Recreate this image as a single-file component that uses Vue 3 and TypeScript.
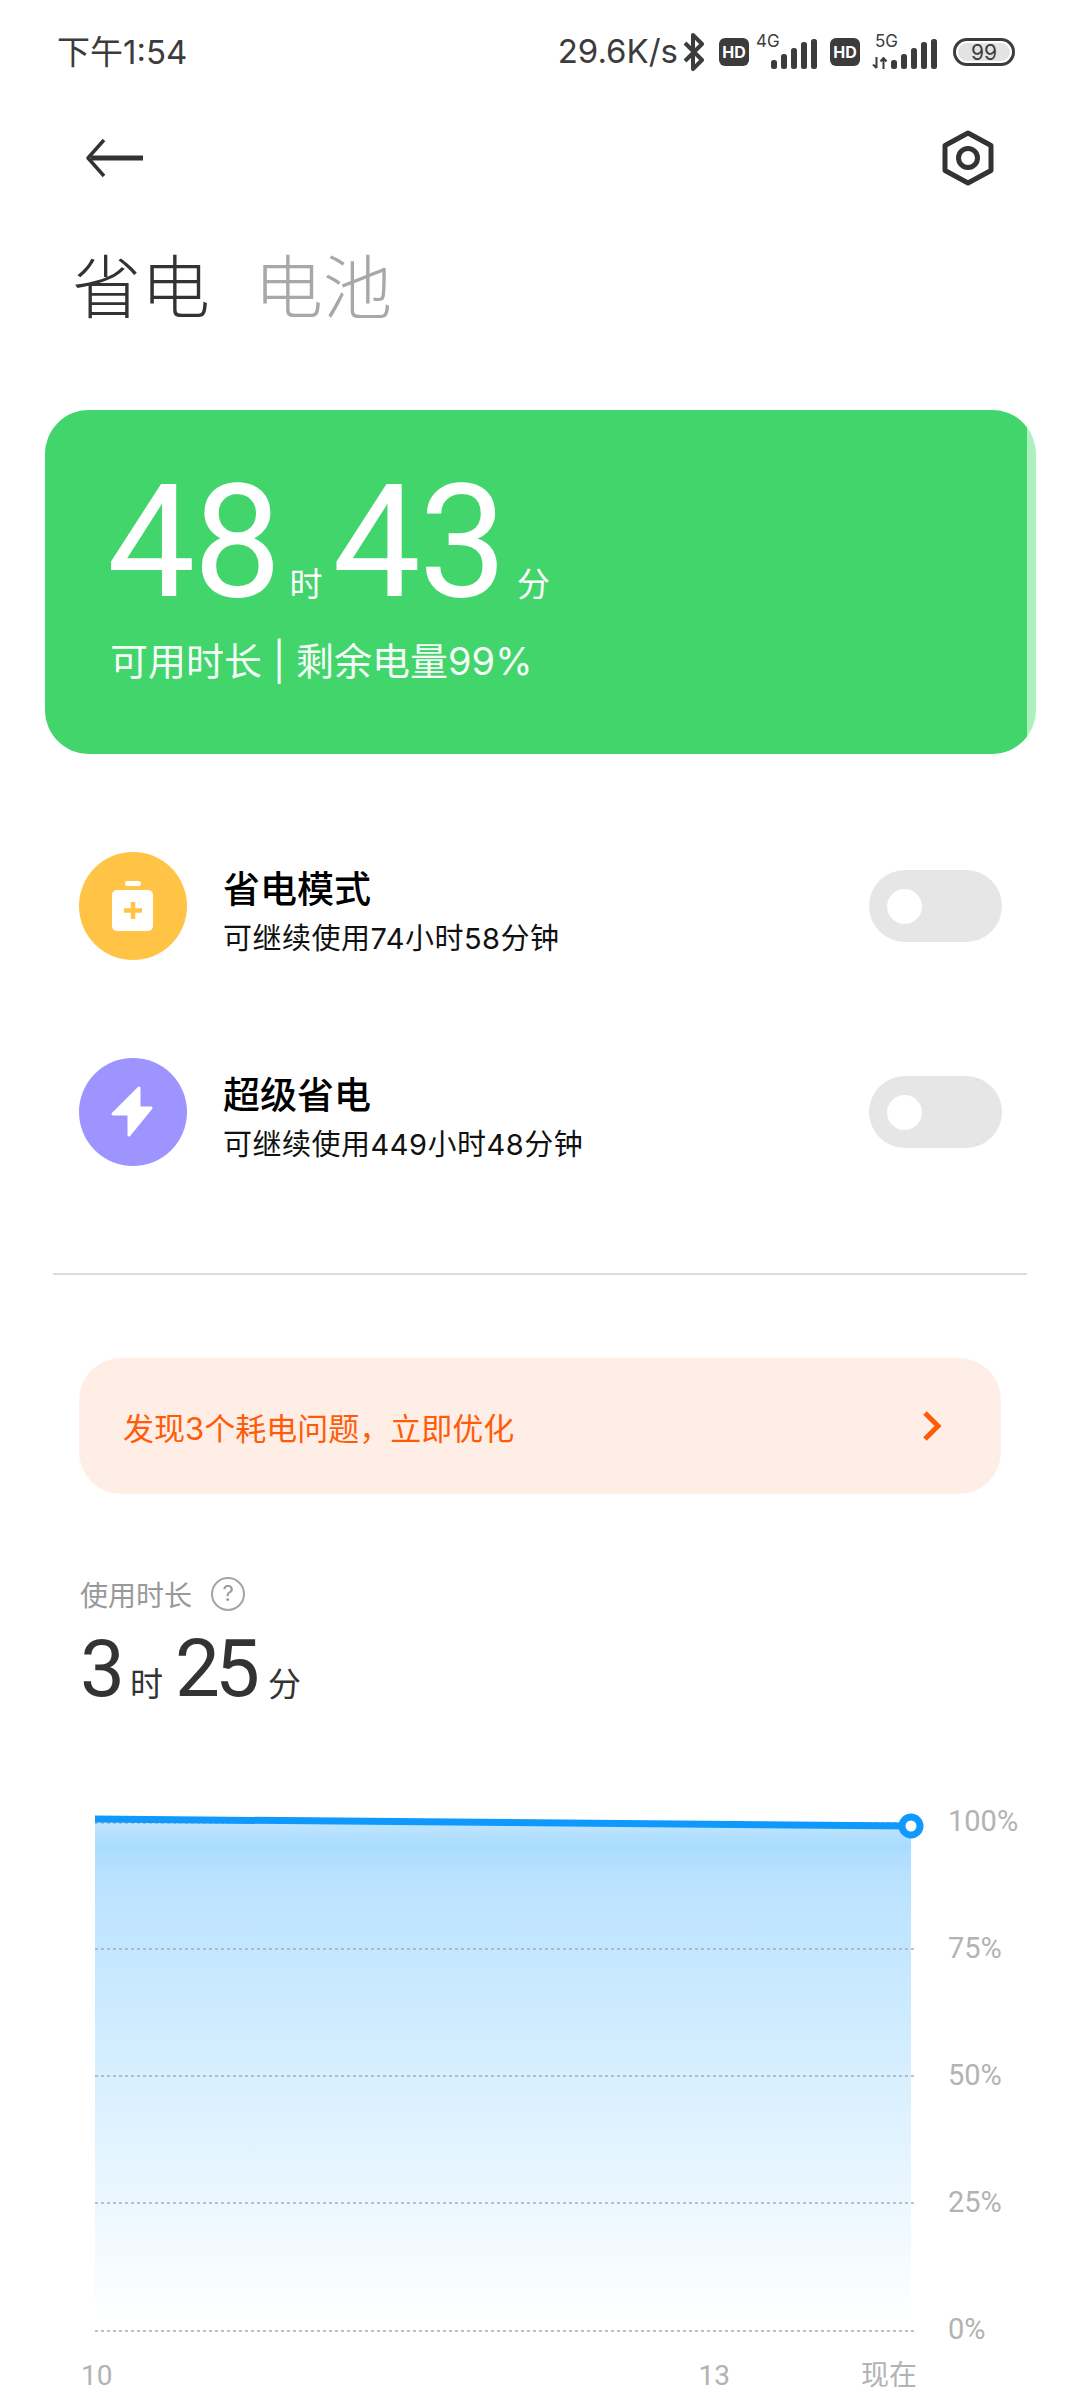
<template>
  <main class="page">
    <header class="status">
      <span class="clock">下午1:54</span>
      <div class="status-right">
        <span class="speed">29.6K/s</span>
        <svg class="bt" viewBox="0 0 24 38" width="24" height="38">
          <path d="M3 10 L20 27 L11 36 V2 L20 11 L3 28" fill="none" stroke="#3c3c3c" stroke-width="4" stroke-linejoin="round" />
        </svg>
        <span class="hd">HD</span>
        <div class="net net-4g">
          <span class="net-name">4G</span>
          <svg class="bars" viewBox="0 0 46 30" width="46" height="30">
            <rect v-for="(h, i) in barHeights" :key="i" :x="i * 10" :y="30 - h" width="6" :height="h" rx="2.5" fill="#3c3c3c" />
          </svg>
        </div>
        <span class="hd">HD</span>
        <div class="net net-5g">
          <span class="net-name">5G</span>
          <svg class="arrows" viewBox="0 0 16 12" width="16" height="12">
            <path d="M4.5 0 V11 M1 7.5 L4.5 11 M11.5 12 V1 M8.5 4.5 L11.5 1 L14.5 4.5" fill="none" stroke="#3c3c3c" stroke-width="2" />
          </svg>
          <svg class="bars" viewBox="0 0 46 30" width="46" height="30">
            <rect v-for="(h, i) in barHeights" :key="i" :x="i * 10" :y="30 - h" width="6" :height="h" rx="2.5" fill="#3c3c3c" />
          </svg>
        </div>
        <div class="battery"><span>99</span></div>
      </div>
    </header>

    <nav class="toolbar">
      <svg viewBox="0 0 60 40" width="60" height="40">
        <path d="M58 20 H6" fill="none" stroke="#333" stroke-width="5" />
        <path d="M19 2 L3 20 L19 38" fill="none" stroke="#333" stroke-width="3.5" stroke-linejoin="round" />
      </svg>
      <svg viewBox="0 0 54 56" width="54" height="56">
        <path d="M27 3 L50 15.5 V40.5 L27 53 L4 40.5 V15.5 Z" fill="none" stroke="#333" stroke-width="5" stroke-linejoin="round" />
        <circle cx="27" cy="28" r="9.5" fill="none" stroke="#333" stroke-width="5" />
      </svg>
    </nav>

    <div class="tabs">
      <span class="tab active">省电</span>
      <span class="tab">电池</span>
    </div>

    <section class="card">
      <div class="card-inner">
        <div class="hero">
          <span class="hero-num">48</span><span class="hero-unit">时</span>
          <span class="hero-num">43</span><span class="hero-unit hero-unit-end">分</span>
        </div>
        <p class="hero-sub">可用时长 | 剩余电量99%</p>
      </div>
    </section>

    <section class="modes">
      <div v-for="mode in modes" :key="mode.title" class="mode">
        <div class="mode-icon" :class="mode.kind">
          <svg v-if="mode.kind === 'save'" viewBox="0 0 108 108" width="108" height="108">
            <rect x="46" y="29" width="16" height="5" rx="2.5" fill="#fff" />
            <rect x="33" y="38" width="41" height="41" rx="5" fill="#fff" />
            <path d="M54 50 V67 M45 58.5 H63" stroke="#ffc445" stroke-width="4.5" />
          </svg>
          <svg v-else viewBox="0 0 108 108" width="108" height="108">
            <path d="M60 30 L34 56 H50 V77 L72 50 H60 Z" fill="#fff" stroke="#fff" stroke-width="3" stroke-linejoin="round" />
          </svg>
        </div>
        <div class="mode-text">
          <h3>{{ mode.title }}</h3>
          <p>{{ mode.desc }}</p>
        </div>
        <div class="toggle"><i></i></div>
      </div>
    </section>

    <hr class="divider" />

    <div class="banner">
      <span>发现3个耗电问题，立即优化</span>
      <svg viewBox="0 0 22 32" width="22" height="32">
        <path d="M4 3 L17 16 L4 29" fill="none" stroke="#ff5c0a" stroke-width="5" />
      </svg>
    </div>

    <section class="usage">
      <div class="usage-label">
        <span>使用时长</span>
        <i class="help">?</i>
      </div>
      <div class="usage-value">
        <span class="usage-num">3</span><span class="usage-unit">时</span>
        <span class="usage-num">25</span><span class="usage-unit usage-unit-end">分</span>
      </div>
    </section>

    <section class="chart">
      <div class="chart-row">
        <svg class="plot" viewBox="0 0 845 530" width="845" height="530">
          <defs>
            <linearGradient id="fill" x1="0" y1="0" x2="0" y2="1">
              <stop offset="0" stop-color="#c4e7ff" />
              <stop offset="0.05" stop-color="#aadcff" />
              <stop offset="0.12" stop-color="#bae2ff" />
              <stop offset="0.35" stop-color="#cbeaff" />
              <stop offset="0.75" stop-color="#ebf7ff" />
              <stop offset="1" stop-color="#ffffff" />
            </linearGradient>
          </defs>
          <path d="M0 14 L816 20 V518 H0 Z" fill="url(#fill)" />
          <line
            v-for="y in gridLines"
            :key="y"
            x1="0"
            :y1="y"
            x2="819"
            :y2="y"
            stroke="#a3aeb8"
            stroke-width="1.5"
            stroke-dasharray="3 3"
          />
          <path d="M0 13 L816 20" stroke="#0f99fc" stroke-width="7" fill="none" />
          <circle cx="816" cy="20" r="9" fill="#fff" stroke="#0f99fc" stroke-width="7" />
        </svg>
        <div class="y-axis">
          <span v-for="label in yLabels" :key="label">{{ label }}</span>
        </div>
      </div>
      <div class="x-axis">
        <span class="x-start">10</span>
        <span class="x-mid">13</span>
        <span class="x-end">现在</span>
      </div>
    </section>
  </main>
</template>

<script setup lang="ts">
interface Mode {
  kind: 'save' | 'super'
  title: string
  desc: string
}

const barHeights = [9, 15, 21, 27, 30]

const modes: Mode[] = [
  { kind: 'save', title: '省电模式', desc: '可继续使用74小时58分钟' },
  { kind: 'super', title: '超级省电', desc: '可继续使用449小时48分钟' },
]

const gridLines = [17, 143, 270, 397, 525]
const yLabels = ['100%', '75%', '50%', '25%', '0%']
</script>

<style>
html,
body {
  margin: 0;
  background: #fff;
}
</style>

<style scoped>
.page {
  width: 1080px;
  height: 2400px;
  overflow: hidden;
  background: #fff;
  font-family: Inter, "Noto Sans CJK SC", sans-serif;
  color: #333;
}

.status {
  height: 104px;
  display: flex;
  align-items: center;
  justify-content: space-between;
  padding: 0 65px 0 57px;
  color: #3c3c3c;
}

.clock {
  font-size: 33px;
  position: relative;
  top: -2px;
}

.status-right {
  display: flex;
  align-items: center;
}

.speed {
  font-size: 33px;
  margin-right: 4px;
  position: relative;
  top: -1px;
}

.bt {
  margin-right: 13px;
}

.hd {
  width: 30px;
  height: 28px;
  border-radius: 6px;
  background: #3c3c3c;
  color: #fff;
  font-size: 16px;
  font-weight: 700;
  line-height: 28px;
  text-align: center;
}

.net {
  position: relative;
  height: 34px;
}

.net-4g {
  width: 61px;
  margin: 0 13px 0 7px;
}

.net-5g {
  width: 65px;
  margin: 0 16px 0 12px;
}

.net-name {
  position: absolute;
  left: 0;
  top: -3px;
  font-size: 17px;
  line-height: 18px;
}

.net-5g .net-name {
  left: 3px;
}

.net .bars {
  position: absolute;
  right: 0;
  bottom: 0;
}

.arrows {
  position: absolute;
  left: 0;
  bottom: 0;
}

.battery {
  width: 62px;
  height: 28px;
  box-sizing: border-box;
  border: 3px solid #3c3c3c;
  border-radius: 14px;
  padding: 2px;
  display: flex;
}

.battery span {
  flex: 1;
  background: #e3e3e3;
  border-radius: 9px;
  font-size: 21px;
  line-height: 20px;
  text-align: center;
}

.toolbar {
  height: 108px;
  display: flex;
  align-items: center;
  justify-content: space-between;
  padding: 0 85px;
}

.tabs {
  margin-top: 39px;
  padding-left: 72px;
  display: flex;
  gap: 44px;
  height: 74px;
  align-items: center;
}

.tab {
  font-size: 69px;
  font-weight: 300;
  line-height: 74px;
  color: #a8a8a8;
}

.tab.active {
  color: #333;
}

.card {
  margin: 85px 0 0 45px;
  width: 991px;
  height: 344px;
  border-radius: 44px;
  background: #aff0c0;
  overflow: hidden;
}

.card-inner {
  width: 982px;
  height: 344px;
  box-sizing: border-box;
  background: #41d56b;
  padding: 67px 0 0 65px;
  color: #fff;
}

.hero {
  display: flex;
  align-items: baseline;
  height: 130px;
  font-family: Roboto, "Noto Sans CJK SC", sans-serif;
}

.hero-num {
  font-size: 157px;
  line-height: 130px;
  letter-spacing: -2px;
  margin-left: -3px;
  font-weight: 400;
}

.hero-unit {
  font-size: 33px;
  margin: 0 13px 0 10px;
}

.hero-unit-end {
  margin-left: 12px;
}

.hero-sub {
  margin: 29px 0 0;
  font-size: 38px;
  line-height: 50px;
  opacity: 0.95;
}

.modes {
  margin-top: 49px;
}

.mode {
  height: 206px;
  display: flex;
  align-items: center;
  padding: 0 78px 0 79px;
}

.mode-icon {
  width: 108px;
  height: 108px;
  border-radius: 50%;
  flex: none;
}

.mode-icon svg {
  display: block;
}

.mode-icon.save {
  background: #ffc445;
}

.mode-icon.super {
  background: #9e94ff;
}

.mode-text {
  margin-left: 36px;
  padding-top: 12px;
  flex: 1;
}

.mode-text h3 {
  margin: 0;
  font-size: 37px;
  font-weight: 500;
  line-height: 50px;
  color: #000;
}

.mode-text p {
  margin: 4px 0 0;
  font-size: 29px;
  letter-spacing: 0.5px;
  line-height: 40px;
  color: #111;
}

.toggle {
  width: 133px;
  height: 72px;
  border-radius: 36px;
  background: #e6e6e6;
  display: flex;
  align-items: center;
  padding-left: 18px;
  box-sizing: border-box;
}

.toggle i {
  width: 35px;
  height: 35px;
  border-radius: 50%;
  background: #fff;
}

.divider {
  margin: 58px 53px 0;
  border: 0;
  border-top: 2px solid #dcdcdc;
}

.banner {
  margin: 83px 79px 0;
  height: 136px;
  border-radius: 42px;
  background: #ffeee6;
  display: flex;
  align-items: center;
  justify-content: space-between;
  padding: 0 58px 0 44px;
  color: #ff5c0a;
  font-size: 31px;
}

.usage {
  margin: 82px 0 0 80px;
}

.usage-label {
  display: flex;
  align-items: center;
  gap: 19px;
  height: 36px;
  font-size: 28px;
  color: #999;
}

.help {
  width: 34px;
  height: 34px;
  box-sizing: border-box;
  border: 2.5px solid #a5a5a5;
  border-radius: 50%;
  font-size: 22px;
  font-style: normal;
  line-height: 29px;
  text-align: center;
}

.usage-value {
  display: flex;
  align-items: baseline;
  height: 80px;
  margin-top: 17px;
  font-family: Roboto, "Noto Sans CJK SC", sans-serif;
}

.usage-num {
  font-size: 80px;
  line-height: 80px;
  letter-spacing: -5px;
}

.usage-unit {
  font-size: 33px;
  margin: 0 12px 0 10px;
}

.usage-unit-end {
  margin-left: 13px;
}

.chart {
  margin-top: 97px;
  font-family: Roboto, "Noto Sans CJK SC", sans-serif;
}

.chart-row {
  display: flex;
  height: 530px;
  padding-left: 95px;
}

.plot {
  display: block;
  flex: none;
  overflow: visible;
}

.y-axis {
  display: flex;
  flex-direction: column;
  margin-left: 8px;
  color: #b3b3b3;
  font-size: 29px;
}

.y-axis span {
  flex: none;
  height: 127px;
  line-height: 30px;
}

.x-axis {
  display: flex;
  margin-top: 22px;
  padding-left: 81px;
  color: #b3b3b3;
  font-size: 28px;
  line-height: 36px;
}

.x-mid {
  margin-left: 586px;
}

.x-end {
  margin-left: 131px;
}
</style>
